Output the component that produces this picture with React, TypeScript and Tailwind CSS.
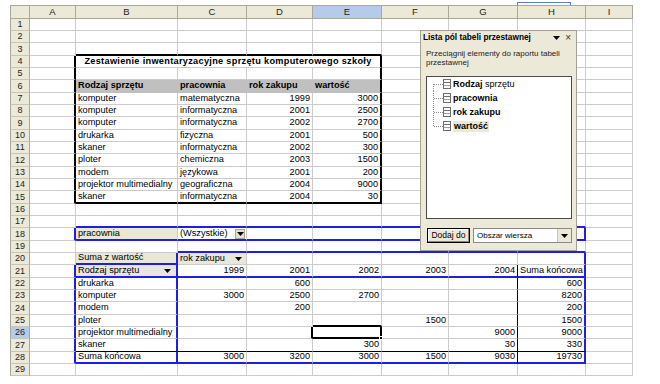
import React from "react";

// column widths: row header, A..I
const COLW = [
  "w-[20px]",
  "w-[46px]",
  "w-[102px]",
  "w-[69px]",
  "w-[66px]",
  "w-[69px]",
  "w-[67px]",
  "w-[69px]",
  "w-[68px]",
  "w-[47px]",
];
const LETTERS = ["", "A", "B", "C", "D", "E", "F", "G", "H", "I"];

const GRID_R = "border-r border-r-[#cccccc]";
const GRID_B = "border-b border-b-[#cccccc]";
const THICK_R = "border-r-2 border-r-black";
const THICK_B = "border-b-2 border-b-black";
const BLUE_R = "border-r-2 border-r-[#1f1fe3]";
const BLUE_B = "border-b-2 border-b-[#1f1fe3]";
const THIN_R = "border-r border-r-black";
const THIN_B = "border-b border-b-black";
const GRAY_R = "border-r border-r-[#c0c0c0]";
const GRAY_B = "border-b border-b-[#c0c0c0]";

const SRC_HEAD = ["Rodzaj sprzętu", "pracownia", "rok zakupu", "wartość"];
const SRC = [
  ["komputer", "matematyczna", "1999", "3000"],
  ["komputer", "informatyczna", "2001", "2500"],
  ["komputer", "informatyczna", "2002", "2700"],
  ["drukarka", "fizyczna", "2001", "500"],
  ["skaner", "informatyczna", "2002", "300"],
  ["ploter", "chemiczna", "2003", "1500"],
  ["modem", "językowa", "2001", "200"],
  ["projektor multimedialny", "geograficzna", "2004", "9000"],
  ["skaner", "informatyczna", "2004", "30"],
];

// pivot rows 21..28, columns B..H
const PIV = [
  ["", "1999", "2001", "2002", "2003", "2004", "Suma końcowa"],
  ["drukarka", "", "600", "", "", "", "600"],
  ["komputer", "3000", "2500", "2700", "", "", "8200"],
  ["modem", "", "200", "", "", "", "200"],
  ["ploter", "", "", "", "1500", "", "1500"],
  ["projektor multimedialny", "", "", "", "", "9000", "9000"],
  ["skaner", "", "", "300", "", "30", "330"],
  ["Suma końcowa", "3000", "3200", "3000", "1500", "9030", "19730"],
];

const inR = (v: number, a: number, b: number) => v >= a && v <= b;

function rightBorder(r: number, c: number) {
  if (c === 1 && inR(r, 4, 15)) return THICK_R;
  if (c === 1 && (r === 18 || inR(r, 21, 28))) return BLUE_R;
  if (c === 2 && inR(r, 20, 28)) return BLUE_R;
  if (c === 4 && r === 26) return THICK_R;
  if (c === 5 && (inR(r, 4, 15) || r === 26)) return THICK_R;
  if (c === 7 && inR(r, 21, 28)) return THIN_R;
  if (c === 8 && (r === 18 || inR(r, 20, 28))) return BLUE_R;
  if (r === 6 && inR(c, 2, 4)) return GRAY_R;
  return GRID_R;
}

function bottomBorder(r: number, c: number) {
  if (inR(c, 2, 5) && (r === 3 || r === 15)) return THICK_B;
  if (c === 5 && (r === 25 || r === 26)) return THICK_B;
  if (inR(c, 2, 8) && (r === 17 || r === 18 || r === 21 || r === 28)) return BLUE_B;
  if (inR(c, 3, 8) && r === 19) return BLUE_B;
  if (c === 2 && r === 20) return BLUE_B;
  if (inR(c, 2, 8) && r === 27) return THIN_B;
  if (r === 6 && inR(c, 2, 5)) return GRAY_B;
  return GRID_B;
}

function cellBg(r: number, c: number) {
  if (r === 6 && inR(c, 2, 5)) return "bg-[#c0c0c0]";
  if ((r === 18 && c === 2) || (r === 20 && (c === 2 || c === 3)) || (r === 21 && c === 2))
    return "bg-[#e9e6da]";
  return "";
}

function cellText(r: number, c: number) {
  if (r === 6 && inR(c, 2, 5)) return SRC_HEAD[c - 2];
  if (inR(r, 7, 15) && inR(c, 2, 5)) return SRC[r - 7][c - 2];
  if (inR(r, 21, 28) && inR(c, 2, 8)) return PIV[r - 21][c - 2];
  if (r === 20 && c === 2) return "Suma z wartość";
  if (r === 18 && c === 2) return "pracownia";
  return "";
}

function Arrow() {
  return (
    <svg width="7" height="4" viewBox="0 0 7 4" className="shrink-0">
      <path d="M0 0h7L3.5 4z" fill="#000" />
    </svg>
  );
}

function Cell({ r, c }: { r: number; c: number }) {
  const h = r % 3 === 0 ? "h-[13px]" : "h-[12px]";
  const merged = r === 4 && c === 2;
  const w = merged ? "w-[306px]" : COLW[c];
  const rb = merged ? rightBorder(4, 5) : rightBorder(r, c);
  const base = `${w} ${h} shrink-0 flex items-center overflow-visible whitespace-nowrap text-[9.2px] leading-none ${rb} ${bottomBorder(r, c)} ${cellBg(r, c)}`;

  if (merged) {
    return (
      <div className={`${base} justify-center font-bold tracking-[0.3px]`}>
        Zestawienie inwentaryzacyjne sprzętu komputerowego szkoły
      </div>
    );
  }
  if (r === 18 && c === 3) {
    return (
      <div className={`${base} pl-[2px]`}>
        <span>(Wszystkie)</span>
        <span className="ml-auto mr-[1px] w-[10px] h-[10px] bg-[#e3dfd2] border border-[#aca899] flex items-center justify-center">
          <Arrow />
        </span>
      </div>
    );
  }
  if (r === 20 && c === 3) {
    return (
      <div className={`${base} pl-[2px]`}>
        <span>rok zakupu</span>
        <span className="ml-auto mr-[4px]">
          <Arrow />
        </span>
      </div>
    );
  }
  if (r === 21 && c === 2) {
    return (
      <div className={`${base} pl-[2px]`}>
        <span>Rodzaj sprzętu</span>
        <span className="ml-auto mr-[5px]">
          <Arrow />
        </span>
      </div>
    );
  }
  const t = cellText(r, c);
  const num = /^\d+$/.test(t);
  const bold = r === 6 && inR(c, 2, 5);
  return (
    <div className={`${base} ${num ? "justify-end pr-[2px]" : "pl-[2px]"} ${bold ? "font-bold" : ""} ${r === 26 && c === 5 ? "relative" : ""}`}>
      {t}
      {r === 26 && c === 5 && (
        <span className="absolute right-[-3px] bottom-[-3px] w-[4px] h-[4px] bg-black border border-white" />
      )}
    </div>
  );
}

function SheetRow({ r }: { r: number }) {
  const h = r % 3 === 0 ? "h-[13px]" : "h-[12px]";
  const cells: React.ReactNode[] = [];
  for (let c = 1; c <= 9; c++) {
    if (r === 4 && c >= 3 && c <= 5) continue;
    cells.push(<Cell key={c} r={r} c={c} />);
  }
  return (
    <div className="flex">
      <div
        className={`${h} w-[20px] shrink-0 flex items-center justify-center text-[9px] leading-none text-[#222] border-l border-l-[#aca899] border-r border-r-[#aca899] border-b border-b-[#c9c5b4] ${r === 26 ? "bg-[#b6caea]" : "bg-[#ece9d8]"}`}
      >
        {r}
      </div>
      {cells}
    </div>
  );
}

function HeaderRow() {
  return (
    <div className="flex">
      <div className="h-[14px] w-[20px] shrink-0 bg-[#ece9d8] border border-[#aca899]" />
      {LETTERS.slice(1).map((L, i) => (
        <div
          key={L}
          className={`${COLW[i + 1]} h-[14px] shrink-0 flex items-center justify-center text-[9.5px] leading-none text-[#222] border-t border-t-[#aca899] border-b border-b-[#aca899] border-r border-r-[#aca899] ${L === "E" ? "bg-[#b6caea]" : "bg-[#ece9d8]"}`}
        >
          {L}
        </div>
      ))}
    </div>
  );
}

function FieldIcon() {
  return (
    <svg width="8" height="10" viewBox="0 0 8 10" className="shrink-0">
      <rect x="0.5" y="0.5" width="7" height="9" fill="#fff" stroke="#6f6f6f" />
      <line x1="1" y1="3.5" x2="7" y2="3.5" stroke="#6f6f6f" />
      <line x1="1" y1="6.5" x2="7" y2="6.5" stroke="#a0a0a0" />
    </svg>
  );
}

const FIELDS = [
  { bold: "Rodzaj", rest: " sprzętu" },
  { bold: "pracownia" },
  { bold: "rok zakupu" },
  { bold: "wartość", hi: true },
];

function FieldList() {
  return (
    <div className="absolute left-[420px] top-[30px] w-[157px] h-[221px] bg-[#ece9d8] border border-[#a5a293] flex flex-col">
      {/* title bar */}
      <div className="h-[13px] flex items-center justify-between pl-[2px] pr-[5px]">
        <span className="text-[8.3px] font-bold leading-none">Lista pól tabeli przestawnej</span>
        <span className="flex items-center gap-[5px]">
          <Arrow />
          <span className="text-[10px] leading-none text-[#333]">×</span>
        </span>
      </div>
      <div className="mt-[6px] px-[5px] text-[8px] leading-[8.5px] text-[#222]">
        Przeciągnij elementy do raportu tabeli
        <br />
        przestawnej
      </div>

      {/* field list box */}
      <div className="ml-[5px] mr-[4px] mt-[9px] h-[143px] bg-white border border-[#4a4a4a] flex flex-col">
        {FIELDS.map((f, i) => (
          <div key={i} className="h-[14px] flex items-center">
            <svg width="16" height="14" viewBox="0 0 16 14" className="shrink-0">
              <line
                x1="6.5"
                y1={i === 0 ? 7 : 0}
                x2="6.5"
                y2={i === 3 ? 7 : 14}
                stroke="#8c8c8c"
                strokeDasharray="1 1"
              />
              <line x1="7" y1="7.5" x2="16" y2="7.5" stroke="#8c8c8c" strokeDasharray="1 1" />
            </svg>
            <FieldIcon />
            <span className={`ml-[2px] text-[9px] leading-none ${f.hi ? "bg-[#ece9d8] px-[1px] py-[1px]" : ""}`}>
              <span className="font-bold">{f.bold}</span>
              {f.rest}
            </span>
          </div>
        ))}
      </div>

      {/* footer */}
      <div className="mt-[9px] ml-[6px] flex gap-[3px]">
        <div className="w-[43px] h-[15px] border border-black bg-[#ece9d8] shadow-[inset_-1px_-1px_0_#8a877a,inset_1px_1px_0_#ffffff] flex items-center justify-center text-[8.5px] leading-none">
          Dodaj do
        </div>
        <div className="w-[99px] h-[15px] bg-white border border-[#8a8a8a] flex items-center">
          <span className="flex-1 pl-[3px] text-[8px] leading-none">Obszar wiersza</span>
          <span className="w-[14px] h-full bg-[#ece9d8] border-l border-l-[#c8c5b8] flex items-center justify-center">
            <Arrow />
          </span>
        </div>
      </div>
    </div>
  );
}

export default function App() {
  const rows = Array.from({ length: 29 }, (_, i) => i + 1);
  return (
    <div className="relative w-[660px] h-[384px] overflow-hidden bg-white pl-[10px] pt-[5px] font-['Liberation_Sans',Arial,sans-serif] text-black">
      <div className="flex flex-col">
        <HeaderRow />
        {rows.map((r) => (
          <SheetRow key={r} r={r} />
        ))}
      </div>

      {/* edge of a toolbar cut off at the top */}
      <div className="absolute left-[517px] top-[2px] w-[54px] h-[3px] border-t border-l border-r border-[#5a7fd0]" />

      <FieldList />
    </div>
  );
}
